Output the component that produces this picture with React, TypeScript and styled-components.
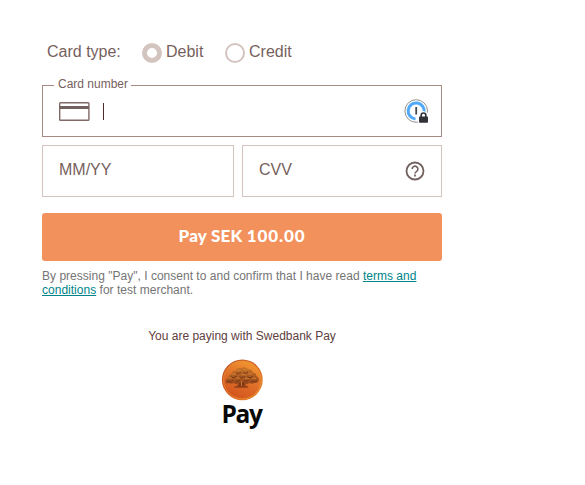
import React from "react";
import styled, { createGlobalStyle } from "styled-components";

const Global = createGlobalStyle`
  *, *::before, *::after { box-sizing: border-box; }
  body { margin: 0; background: #fff; font-family: "Liberation Sans", Arial, sans-serif; color: #775f5d; }
`;

const Form = styled.main`
  width: 400px;
  min-height: 485px;
  margin-left: 42px;
  padding-top: 41px;
  display: flex;
  flex-direction: column;
`;

const TypeRow = styled.div`
  display: flex;
  height: 44px;
  padding-left: 5px;
  font-size: 16px;
  line-height: 22px;
`;

const TypeLabel = styled.span`
  width: 95px;
`;

const Option = styled.label`
  display: flex;
  gap: 4px;
  width: 83px;
  height: 22px;
`;

const Radio = styled.span<{ $checked?: boolean }>`
  width: 20px;
  height: 20px;
  margin-top: 2px;
  border-radius: 50%;
  border: ${(p) => (p.$checked ? "5px" : "2px")} solid #d4c4bf;
`;

const Field = styled.div<{ $active?: boolean }>`
  position: relative;
  display: flex;
  align-items: center;
  height: 52px;
  padding: 0 ${(p) => (p.$active ? "12px" : "16px")} 0 16px;
  border: 1px solid ${(p) => (p.$active ? "#a68b82" : "#d4c4bf")};
  font-size: 16px;
`;

const FloatingLabel = styled.span`
  position: absolute;
  left: 11px;
  top: -9px;
  width: 77px;
  padding-left: 4px;
  background: #fff;
  font-size: 12px;
  line-height: 15px;
  white-space: nowrap;
`;

const Caret = styled.span`
  width: 1px;
  height: 17px;
  margin-left: 13px;
  background: #512b2b;
`;

const Placeholder = styled.span`
  line-height: 18px;
  margin-bottom: 3px;
`;

const Trailing = styled.span`
  display: flex;
  margin-left: auto;
`;

const SplitRow = styled.div`
  display: grid;
  grid-template-columns: 192px 200px;
  gap: 8px;
  margin: 8px 0 16px;
`;

const PayButton = styled.button`
  height: 48px;
  padding: 0 0 2px;
  border: 0;
  border-radius: 3px;
  background: #f3915d;
  color: #fff;
  font: 900 17px/24px Lato, sans-serif;
  letter-spacing: 0.2px;
`;

const Amount = styled.span`
  letter-spacing: 0.9px;
`;

const Consent = styled.p`
  margin: 8px 0 0;
  color: #757575;
  font-size: 12px;
  line-height: 14px;
  letter-spacing: 0.015px;
`;

const Terms = styled.a`
  color: #00848a;
  text-decoration: underline;
`;

const Footer = styled.footer`
  display: flex;
  flex-direction: column;
  align-items: center;
  margin-top: 32px;
  font-size: 12px;
  line-height: 14px;
  color: #604040;
`;

const Brand = styled.div`
  display: flex;
  flex-direction: column;
  align-items: center;
  margin-top: 16px;
`;

const BrandName = styled.span`
  padding-right: 1px;
  color: #090909;
  font: 700 24.5px/26px "Open Sans", sans-serif;
  letter-spacing: -1.3px;
`;

const CardIcon = () => (
  <svg width="31" height="19" viewBox="0 0 31 19" fill="none">
    <rect x=".7" y=".7" width="29.2" height="17.6" rx=".8" stroke="#806966" strokeWidth="1.4" />
    <path d="M1 5.5h29" stroke="#72605e" strokeWidth="3" />
  </svg>
);

const PasswordIcon = () => (
  <svg width="25" height="25" viewBox="0 0 25 25" fill="none">
    <circle cx="12.2" cy="12" r="11.3" fill="#fff" stroke="#919191" strokeWidth="1" />
    <path d="M11.5 19.9A8 8 0 1 1 20 13.5" stroke="#50a9fa" strokeWidth="3" />
    <path d="M12.2 8v7.5" stroke="#44484e" strokeWidth="1.8" />
    <path d="M14 25V17.3l1.3-4 4.2-1.3 4.4 2 1.1 3V25z" fill="#fff" />
    <path d="M17.2 18v-1.7a2.3 2.3 0 0 1 4.6 0V18" stroke="#303338" strokeWidth="1.7" />
    <rect x="15" y="17.4" width="9" height="6.3" rx=".9" fill="#303338" />
  </svg>
);

const HelpIcon = () => (
  <svg width="20" height="20" viewBox="0 0 20 20" fill="none" stroke="#72605e">
    <circle cx="10" cy="10" r="8.5" strokeWidth="1.8" />
    <path d="M7.2 8.1a2.85 2.85 0 1 1 4.7 2.1c-1.1.8-1.9 1.3-1.9 2.3" strokeWidth="1.6" />
    <path d="M9.1 14.5h1.8" strokeWidth="1.8" />
  </svg>
);

const CoinIcon = () => (
  <svg width="42" height="42" viewBox="0 0 42 42">
    <defs>
      <linearGradient id="coin" x1=".75" y1="0" x2=".3" y2="1">
        <stop offset="0" stopColor="#f2982f" />
        <stop offset=".45" stopColor="#e2742b" />
        <stop offset="1" stopColor="#d2521c" />
      </linearGradient>
      <linearGradient id="rim" x1="0" y1="0" x2="1" y2="1">
        <stop offset="0" stopColor="#b84a20" />
        <stop offset=".55" stopColor="#d96322" />
        <stop offset="1" stopColor="#ee8d2d" />
      </linearGradient>
      <linearGradient id="tree" x1="0" y1="0" x2="0" y2="1">
        <stop offset="0" stopColor="#c47328" />
        <stop offset="1" stopColor="#8f3d18" />
      </linearGradient>
    </defs>
    <circle cx="21.3" cy="20.8" r="20.4" fill="url(#rim)" />
    <circle cx="21.3" cy="20.8" r="18.9" fill="url(#coin)" stroke="#e9a03e" strokeWidth=".5" />
    <path
      transform="translate(0 -2)"
      d="M4.5 25q-.3-3 2.5-4 0-3 3.5-3.8 0-3.5 4-3.5 2-3.7 6-2.7 4-2 6.5 1.2 4-.3 4.7 3.3 4 .5 3.7 3.6 3 1 2.4 4.4-.6 3-4.3 2.5-3 1.6-5.3 0-1.7 1.6-4 1.1.2 2 3.2 2.7l-.2 1H13.3l-.2-1q4-.8 4.2-3-3 1-4.5-.7-2.8 1.5-4.8 0-3 1-3.5-1.1z"
      fill="url(#tree)"
    />
    <g transform="translate(0 -2)" fill="none" stroke="#6f3216" strokeWidth=".8">
      <path d="M6 24q3 2 6-.5M10 20q3 1.5 6-1M15 16q3 1.5 5-1M22 16q3 1 5-1M26 20q3 1.5 6-.5M30 24q3 1.5 6-.5M15 24q2 1 4-1M23 24q3 1 5-1M18 20q3 1 6-.5" />
      <path d="M19 29.5v-4M22 29v-4" strokeWidth="1.3" />
    </g>
    <g transform="translate(0 -2)" fill="none" stroke="#dc8736" strokeWidth=".8">
      <path d="M7 21.5q2-2 4 0M11 17.5q2-2 4 0M16 14q2-2 4 0M22 13q2-1.5 4 .5M27 17q2-1.5 4 .5M31 21.5q2-1.5 4 .5M15 21.5q2-2 4 0M21 18q2-1.5 4 .5M24 21.7q2-1.5 4 .3M20.5 29v-5" />
    </g>
  </svg>
);

export default function App() {
  return (
    <>
      <Global />
      <Form>
        <TypeRow>
          <TypeLabel>Card type:</TypeLabel>
          <Option><Radio $checked />Debit</Option>
          <Option><Radio />Credit</Option>
        </TypeRow>
        <Field $active>
          <FloatingLabel>Card number</FloatingLabel>
          <CardIcon />
          <Caret />
          <Trailing><PasswordIcon /></Trailing>
        </Field>
        <SplitRow>
          <Field><Placeholder>MM/YY</Placeholder></Field>
          <Field>
            <Placeholder>CVV</Placeholder>
            <Trailing><HelpIcon /></Trailing>
          </Field>
        </SplitRow>
        <PayButton type="button">Pay SEK <Amount>100.00</Amount></PayButton>
        <Consent>
          By pressing "Pay", I consent to and confirm that I have read <Terms href="#">terms and conditions</Terms> for test merchant.
        </Consent>
        <Footer>
          <span>You are paying with Swedbank Pay</span>
          <Brand>
            <CoinIcon />
            <BrandName>Pay</BrandName>
          </Brand>
        </Footer>
      </Form>
    </>
  );
}
